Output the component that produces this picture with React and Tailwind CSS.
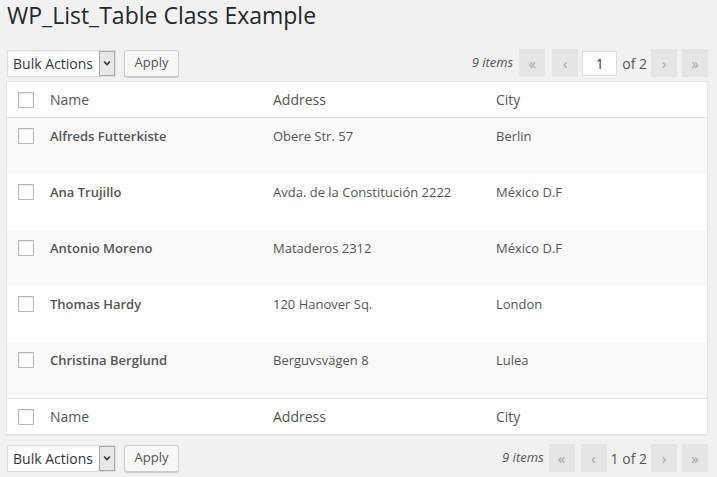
import React from 'react';

const rows = [
  { name: 'Alfreds Futterkiste', address: 'Obere Str. 57', city: 'Berlin' },
  { name: 'Ana Trujillo', address: 'Avda. de la Constitución 2222', city: 'México D.F' },
  { name: 'Antonio Moreno', address: 'Mataderos 2312', city: 'México D.F' },
  { name: 'Thomas Hardy', address: '120 Hanover Sq.', city: 'London' },
  { name: 'Christina Berglund', address: 'Berguvsvägen 8', city: 'Lulea' },
];

function Checkbox() {
  return <span className="block w-4 h-4 bg-white border border-[#b4b9be] shadow-[inset_0_1px_2px_rgba(0,0,0,0.1)]" />;
}

function BulkActions() {
  return (
    <div className="flex items-center gap-2">
      <div className="flex items-center h-[27px] w-[109px] bg-white border border-[#ddd] shadow-[inset_0_1px_2px_rgba(0,0,0,0.07)]">
        <span className="flex-1 pl-[5px] text-[14px] text-[#32373c]">Bulk Actions</span>
        <span className="flex items-center justify-center w-[16px] h-[25px] bg-[#e8e8e8] border border-[#a8a8a8]">
          <svg width="8" height="6" viewBox="0 0 8 6">
            <path d="M1 1.5 L4 4.5 L7 1.5" stroke="#333" strokeWidth="1.6" fill="none" />
          </svg>
        </span>
      </div>
      <button className="h-[27px] bg-[#f7f7f7] border border-[#ccc] rounded-[3px] shadow-[0_1px_0_#ccc] text-[13px] text-[#555] w-[55px]">
        Apply
      </button>
    </div>
  );
}

function NavBtn({ children }) {
  return (
    <span className="flex items-center justify-center w-[26px] h-[28px] bg-[#e5e5e5] text-[#a0a5aa] text-[15px] leading-none">
      {children}
    </span>
  );
}

function HeadRow({ top }) {
  return (
    <div className={`flex items-center h-[36px] ${top ? 'border-b' : 'border-t'} border-[#e1e1e1]`}>
      <div className="w-[33px] pl-[11px] shrink-0"><Checkbox /></div>
      <div className="w-[223px] px-[10px] text-[14px] text-[#555]">Name</div>
      <div className="w-[223px] px-[10px] text-[14px] text-[#555]">Address</div>
      <div className="flex-1 px-[10px] text-[14px] text-[#555]">City</div>
    </div>
  );
}

export default function App() {
  return (
    <div className="min-h-[477px] bg-[#f1f1f1] pl-[6px] pr-[9px] font-['Open_Sans',sans-serif]">
      <h1 className="text-[23px] font-normal text-[#23282d] leading-[28px] pt-[1px] pl-[1px]">WP_List_Table Class Example</h1>

      {/* top nav */}
      <div className="flex items-center justify-between mt-[20px] pl-[1px] h-[28px]">
        <BulkActions />
        <div className="flex items-center">
          <span className="italic text-[13px] text-[#555] mr-[6px]">9 items</span>
          <NavBtn>«</NavBtn>
          <span className="w-[7px]" />
          <NavBtn>‹</NavBtn>
          <span className="w-[4px]" />
          <span className="flex items-center justify-center w-[35px] h-[25px] bg-white border border-[#ddd] text-[14px] text-[#32373c]">1</span>
          <span className="text-[14px] text-[#555] ml-[5px] mr-[4px]">of 2</span>
          <NavBtn>›</NavBtn>
          <span className="w-[5px]" />
          <NavBtn>»</NavBtn>
        </div>
      </div>

      {/* table */}
      <div className="mt-[4px] bg-white border border-[#e5e5e5] shadow-[0_1px_1px_rgba(0,0,0,0.04)]">
        <HeadRow top />
        {rows.map((r, i) => (
          <div key={r.name} className={`flex items-start h-[56px] pt-[8px] ${i % 2 === 0 ? 'bg-[#f9f9f9]' : 'bg-white'}`}>
            <div className="w-[33px] pl-[11px] pt-[2px] shrink-0"><Checkbox /></div>
            <div className="w-[223px] px-[10px] text-[13px] leading-[20px] font-semibold text-[#555]">{r.name}</div>
            <div className="w-[223px] px-[10px] text-[13px] leading-[20px] text-[#555]">{r.address}</div>
            <div className="flex-1 px-[10px] text-[13px] leading-[20px] text-[#555]">{r.city}</div>
          </div>
        ))}
        <HeadRow />
      </div>

      {/* bottom nav */}
      <div className="flex items-center justify-between mt-[9px] pl-[1px] h-[28px]">
        <BulkActions />
        <div className="flex items-center">
          <span className="italic text-[13px] text-[#555] mr-[5px]">9 items</span>
          <NavBtn>«</NavBtn>
          <span className="w-[6px]" />
          <NavBtn>‹</NavBtn>
          <span className="text-[14px] text-[#555] ml-[4px] mr-[4px]">1 of 2</span>
          <NavBtn>›</NavBtn>
          <span className="w-[5px]" />
          <NavBtn>»</NavBtn>
        </div>
      </div>
    </div>
  );
}
